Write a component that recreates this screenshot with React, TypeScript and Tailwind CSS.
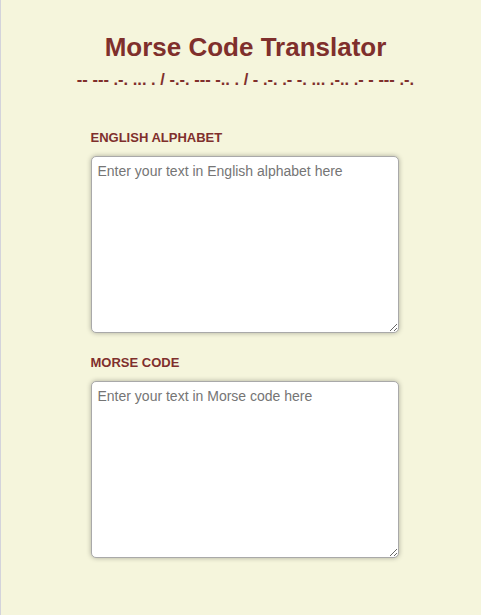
import React from "react";

export default function App() {
  return (
    <div className="min-h-screen bg-[#f5f5dc] border-l border-[#d3d3db] font-['Liberation_Sans',Arial,sans-serif]">
      <div className="flex flex-col items-center pl-[9px] pt-[32px]">
        <h1 className="text-[26px] leading-[1.2] font-bold text-[#7f2f2c]">Morse Code Translator</h1>
        <p className="mt-[7px] text-[16.5px] leading-[1.2] font-bold text-[#7f2f2c]">
          -- --- .-. ... . / -.-. --- -.. . / - .-. .- -. ... .-.. .- - --- .-.
        </p>
        <div className="w-[308px] mr-[2px] mt-[40px] flex flex-col">
          <label className="text-[13px] leading-[1.2] font-bold text-[#7f2f2c]">ENGLISH ALPHABET</label>
          <textarea
            className="mt-[10px] h-[177px] w-full rounded-[5px] border border-[#a9a9a9] bg-white p-[6px] text-[14px] leading-[1.2] text-[#333] shadow-[0_0_5px_rgba(0,0,0,0.3)] outline-none placeholder:text-[#757575]"
            placeholder="Enter your text in English alphabet here"
          />
          <label className="mt-[22px] text-[13px] leading-[1.2] font-bold text-[#7f2f2c]">MORSE CODE</label>
          <textarea
            className="mt-[11px] h-[177px] w-full rounded-[5px] border border-[#a9a9a9] bg-white p-[6px] text-[14px] leading-[1.2] text-[#333] shadow-[0_0_5px_rgba(0,0,0,0.3)] outline-none placeholder:text-[#757575]"
            placeholder="Enter your text in Morse code here"
          />
        </div>
      </div>
    </div>
  );
}
